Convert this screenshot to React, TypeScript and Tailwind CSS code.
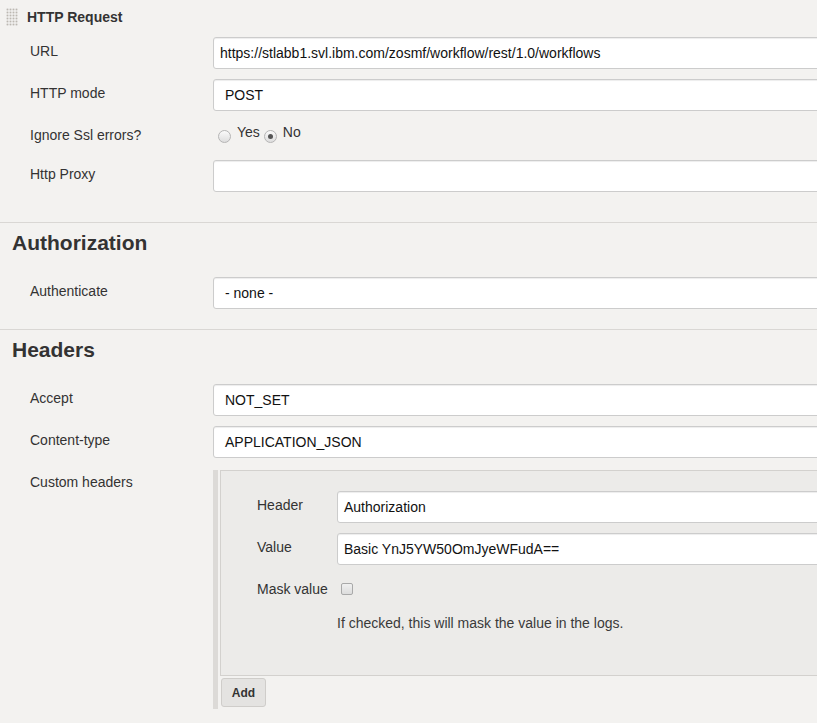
const inputCls =
  "h-[32px] flex items-center border border-[#cccccc] rounded-[3px] bg-white shadow-[inset_0_1px_1px_rgba(0,0,0,0.075)] text-[#111] whitespace-nowrap";

function DragHandle() {
  const dots = [];
  for (let r = 0; r < 6; r++) {
    for (let c = 0; c < 4; c++) {
      dots.push(<rect key={`${r}-${c}`} x={c * 3 + 0.5} y={r * 3 + 0.5} width="2" height="2" fill="#bcb8b1" />);
    }
  }
  return (
    <svg width="12" height="18" viewBox="0 0 12 18" className="shrink-0">
      <rect width="12" height="18" fill="#fdfdfc" />
      {dots}
    </svg>
  );
}

function Row({ label, children }: { label: string; children: React.ReactNode }) {
  return (
    <div className="flex items-start">
      <div className="w-[213px] shrink-0 pl-[30px] pt-[4px] leading-[20px]">{label}</div>
      <div className="flex-1">{children}</div>
    </div>
  );
}

function TextBox({ value, select }: { value: string; select?: boolean }) {
  return <div className={`${inputCls} ${select ? "pl-[11px]" : "pl-[6px]"}`}>{value}</div>;
}

function Radio({ checked }: { checked?: boolean }) {
  return (
    <span className="mt-[9px] w-[13px] h-[13px] rounded-full border border-[#b5b5b5] bg-gradient-to-b from-[#fafafa] to-[#dedede] flex items-center justify-center shrink-0">
      {checked && <span className="w-[5px] h-[5px] rounded-full bg-[#555]" />}
    </span>
  );
}

function SectionTitle({ title }: { title: string }) {
  return (
    <div className="border-t border-[#d9d7d4] pt-[6px]">
      <h2 className="pl-[12px] text-[21px] leading-[28px] font-bold text-[#333]">{title}</h2>
    </div>
  );
}

export default function App() {
  return (
    <div className="min-h-screen w-full overflow-hidden bg-[#f3f2f0] font-['Liberation_Sans',Arial,sans-serif] text-[14px] text-[#333]">
      <div className="w-[900px] pb-[20px]">
        {/* HTTP Request */}
        <div className="pt-[7px] pl-[6px] flex items-center gap-[9px]">
          <DragHandle />
          <span className="font-bold leading-[20px]">HTTP Request</span>
        </div>

        <div className="mt-[10px] flex flex-col gap-[10px]">
          <Row label="URL">
            <TextBox value="https://stlabb1.svl.ibm.com/zosmf/workflow/rest/1.0/workflows" />
          </Row>
          <Row label="HTTP mode">
            <TextBox value="POST" select />
          </Row>
          <div className="flex items-start h-[29px]">
            <div className="w-[213px] shrink-0 pl-[30px] pt-[4px] leading-[20px]">Ignore Ssl errors?</div>
            <div className="flex items-start pl-[5px]">
              <Radio />
              <span className="ml-[6px] pt-[1px] leading-[20px]">Yes</span>
              <span className="ml-[4px] flex">
                <Radio checked />
              </span>
              <span className="ml-[6px] pt-[1px] leading-[20px]">No</span>
            </div>
          </div>
          <Row label="Http Proxy">
            <TextBox value="" />
          </Row>
        </div>

        {/* Authorization */}
        <div className="mt-[30px]">
          <SectionTitle title="Authorization" />
          <div className="mt-[20px] mb-[20px]">
            <Row label="Authenticate">
              <TextBox value="- none -" select />
            </Row>
          </div>
        </div>

        {/* Headers */}
        <SectionTitle title="Headers" />
        <div className="mt-[20px] flex flex-col gap-[10px]">
          <Row label="Accept">
            <TextBox value="NOT_SET" select />
          </Row>
          <Row label="Content-type">
            <TextBox value="APPLICATION_JSON" select />
          </Row>
          <div className="flex items-start">
            <div className="w-[213px] shrink-0 pl-[30px] pt-[4px] leading-[20px]">Custom headers</div>
            <div className="flex-1 mt-[2px] flex">
              <div className="w-[5px] bg-[#dcdad7] shrink-0" />
              <div className="flex-1 ml-[2px] pb-[2px]">
                <div className="border border-[#d3d1ce] bg-[#ecebe9] pt-[20px] pl-[36px] pb-[42px]">
                  <div className="flex flex-col gap-[10px]">
                    <div className="flex items-start">
                      <div className="w-[80px] shrink-0 pt-[4px] leading-[20px]">Header</div>
                      <div className="flex-1">
                        <TextBox value="Authorization" />
                      </div>
                    </div>
                    <div className="flex items-start">
                      <div className="w-[80px] shrink-0 pt-[4px] leading-[20px]">Value</div>
                      <div className="flex-1">
                        <TextBox value="Basic YnJ5YW50OmJyeWFudA==" />
                      </div>
                    </div>
                    <div className="flex items-start h-[20px]">
                      <div className="w-[80px] shrink-0 pt-[4px] leading-[20px]">Mask value</div>
                      <span className="ml-[4px] mt-[8px] w-[12px] h-[12px] rounded-[2px] border border-[#a9a9a9] bg-gradient-to-b from-[#f0f0f0] to-[#dcdcdc]" />
                    </div>
                  </div>
                  <div className="mt-[18px] pl-[80px] leading-[20px] text-[#3a3a3a]">
                    If checked, this will mask the value in the logs.
                  </div>
                </div>
                <button className="mt-[2px] ml-[1px] w-[45px] h-[29px] rounded-[3px] border border-[#cfcdca] bg-[#e4e3e1] text-[12px] font-bold text-[#333]">
                  Add
                </button>
              </div>
            </div>
          </div>
        </div>
      </div>
    </div>
  );
}
